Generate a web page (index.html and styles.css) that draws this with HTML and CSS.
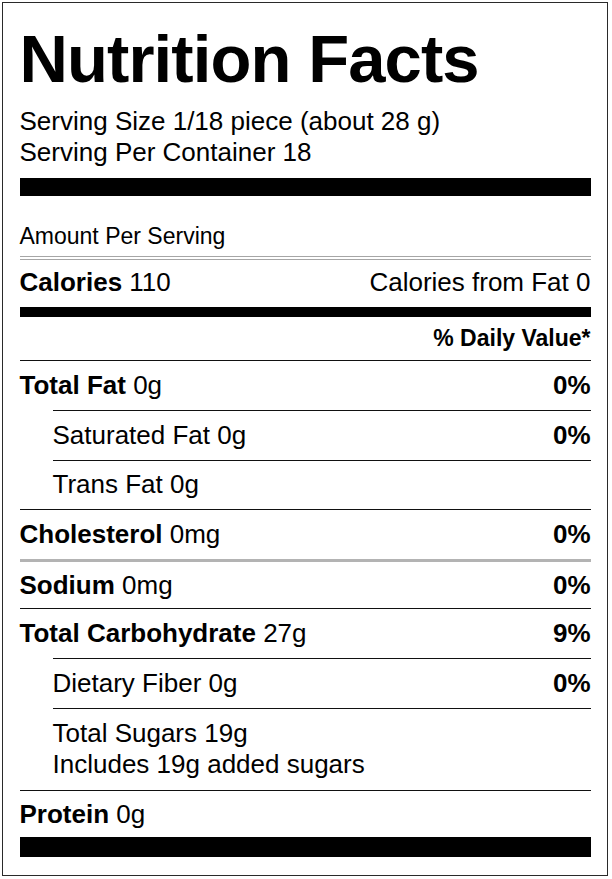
FILE: index.html
```html
<!DOCTYPE html>
<html lang="en">
<head>
<meta charset="utf-8">
<title>Nutrition Facts</title>
<link rel="stylesheet" href="styles.css">
</head>
<body>
<section class="label">
  <h1 class="title">Nutrition Facts</h1>
  <div class="serving">
    <p>Serving Size 1/18 piece (about 28 g)</p>
    <p>Serving Per Container 18</p>
  </div>
  <div class="bar bar-thick"></div>
  <div class="amount">Amount Per Serving</div>
  <div class="calories">
    <span><b>Calories</b> 110</span>
    <span>Calories from Fat 0</span>
  </div>
  <div class="bar bar-mid"></div>
  <div class="dv">% Daily Value*</div>
  <div class="row"><span><b>Total Fat</b> 0g</span><b>0%</b></div>
  <div class="row sub"><span>Saturated Fat 0g</span><b>0%</b></div>
  <div class="row sub"><span>Trans Fat 0g</span></div>
  <div class="row"><span><b>Cholesterol</b> 0mg</span><b>0%</b></div>
  <div class="row gray"><span><b>Sodium</b> 0mg</span><b>0%</b></div>
  <div class="row"><span><b>Total Carbohydrate</b> 27g</span><b>9%</b></div>
  <div class="row sub"><span>Dietary Fiber 0g</span><b>0%</b></div>
  <div class="row sub sugars">
    <span>Total Sugars 19g</span>
    <span>Includes 19g added sugars</span>
  </div>
  <div class="row protein"><span><b>Protein</b> 0g</span></div>
  <div class="bar bar-bottom"></div>
</section>
</body>
</html>
```
FILE: styles.css
```css
* { box-sizing: border-box; }

html, body {
  margin: 0;
  padding: 0;
  background: #fff;
}

body {
  font-family: "Liberation Sans", Arial, Helvetica, sans-serif;
  color: #000;
}

.label {
  margin: 2px;
  width: 606px;
  height: 874px;
  border: 1.5px solid #2a2a2a;
  padding: 0 16.5px;
  display: flex;
  flex-direction: column;
}

.title {
  margin: 0;
  padding-top: 22px;
  font-size: 67px;
  line-height: 67px;
  font-weight: 700;
  letter-spacing: -0.9px;
}

.serving {
  margin-top: 14px;
  font-size: 26px;
  line-height: 31px;
}

.serving p { margin: 0; }

.bar { background: #000; }
.bar-thick { margin-top: 9.5px; height: 18px; }
.bar-mid { height: 10px; }
.bar-bottom { height: 20px; }

.amount {
  margin-top: 27px;
  padding-bottom: 7px;
  font-size: 23px;
  line-height: 26px;
  border-bottom: 4px double #a6a6a6;
}

.calories {
  display: flex;
  justify-content: space-between;
  padding: 7.5px 0 8.5px;
  font-size: 26px;
  line-height: 31px;
}

.dv {
  padding: 8.4px 0 9.6px;
  text-align: right;
  font-size: 23px;
  line-height: 26px;
  font-weight: 700;
}

.row {
  display: flex;
  justify-content: space-between;
  border-top: 1px solid #111;
  padding: 8.8px 0;
  font-size: 26px;
  line-height: 31px;
}

.row.sub { margin-left: 33px; }

.row.gray {
  border-top: 3px solid #b3b3b3;
  padding: 7.8px 0;
}

.row.sugars {
  flex-direction: column;
  padding: 9.5px 0;
}

.row.protein { padding: 8px 0 7.6px; }
```
